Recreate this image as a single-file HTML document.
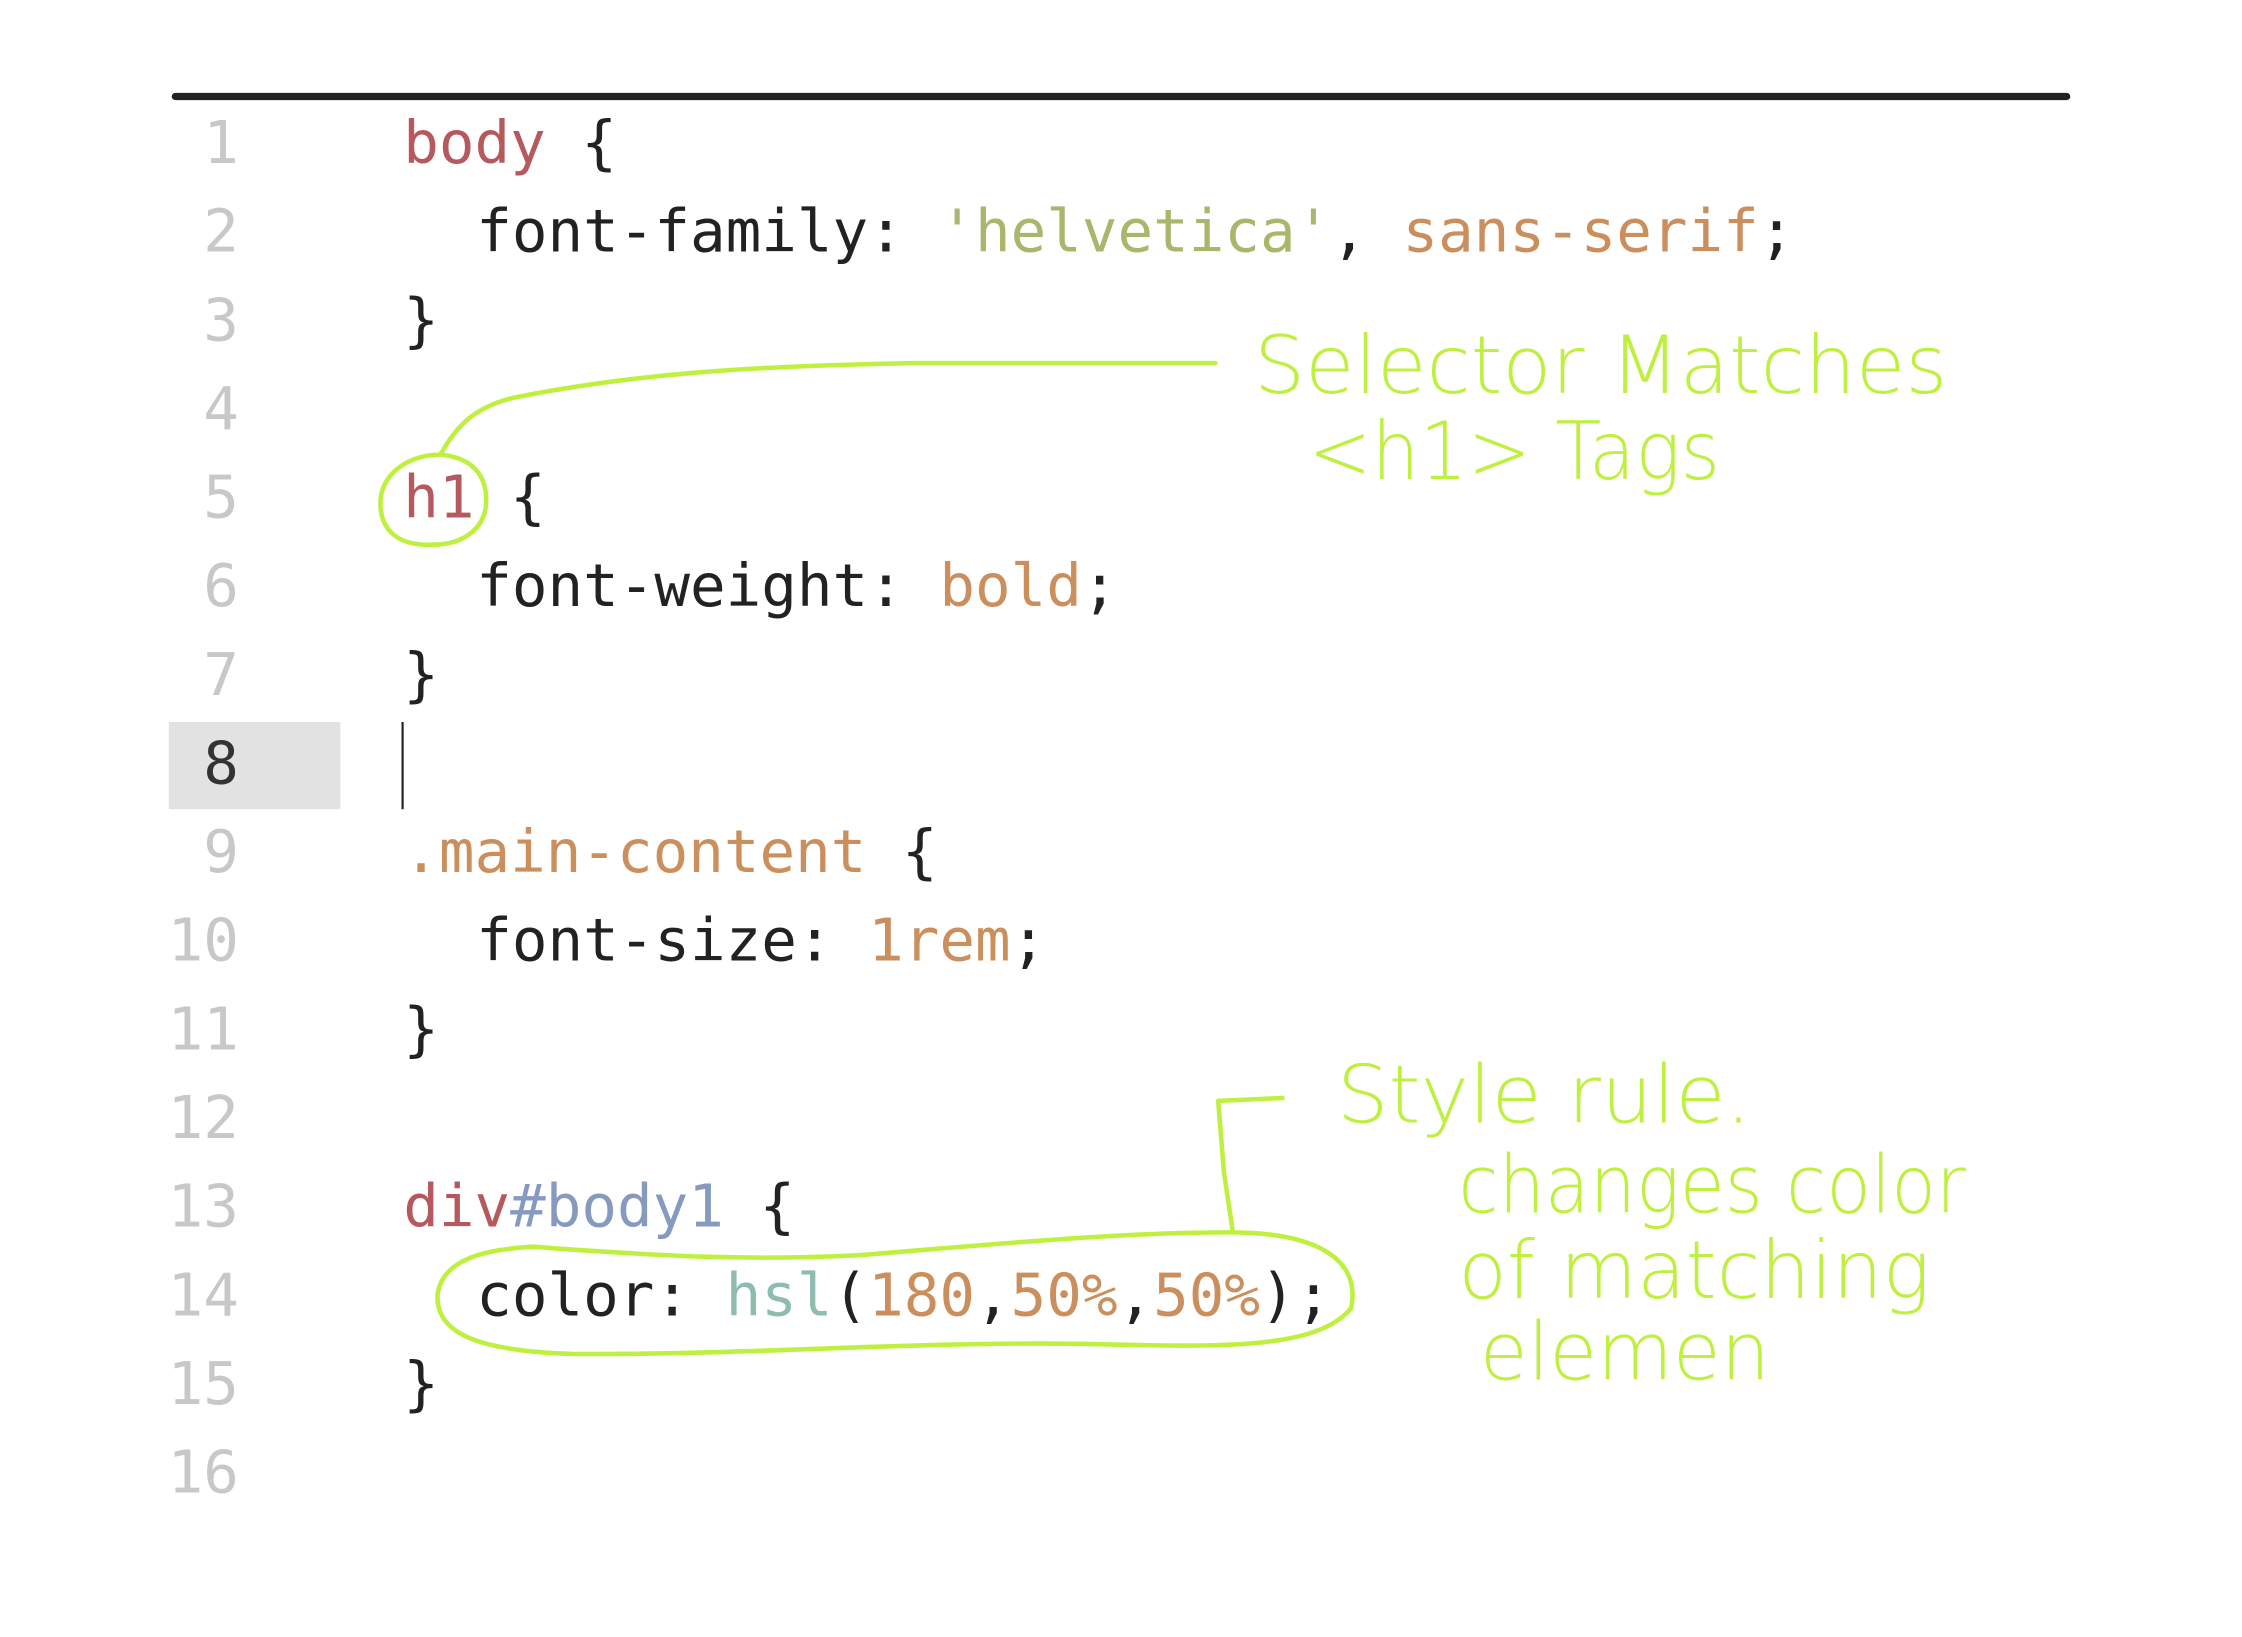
<!DOCTYPE html>
<html><head><meta charset="utf-8"><style>
html,body{margin:0;padding:0;background:#fff;width:2242px;height:1637px;overflow:hidden}
svg{display:block}
.c{font-family:"DejaVu Sans Mono","Liberation Mono",monospace;font-size:41.4px}
.n{fill:#c8c8c8;text-anchor:end}
.k{fill:#b5595e}.o{fill:#cb8f5e}.s{fill:#a9b66c}.b{fill:#869ac0}.t{fill:#8fbcb0}.d{fill:#222}
.h{font-family:"DejaVu Sans","Liberation Sans",sans-serif;font-size:56px;fill:#bff03f;font-weight:200}
.g{fill:none;stroke:#bff03f;stroke-width:3.2;stroke-linecap:round;stroke-linejoin:round}
</style></head><body>
<svg width="2242" height="1637" viewBox="0 0 1568 1145" xmlns="http://www.w3.org/2000/svg">
<rect x="120" y="65" width="1328" height="5" rx="2.5" fill="#222"/>
<rect x="118" y="505" width="120" height="61" fill="#e2e2e2"/>
<line x1="281.5" y1="505" x2="281.5" y2="566" stroke="#222" stroke-width="1.5"/>
<g class="c" transform="translate(0,-3)">
<text class="n" x="167" y="117">1</text>
<text class="n" x="167" y="179">2</text>
<text class="n" x="167" y="241">3</text>
<text class="n" x="167" y="303">4</text>
<text class="n" x="167" y="365">5</text>
<text class="n" x="167" y="427">6</text>
<text class="n" x="167" y="489">7</text>
<text class="n" x="167" y="551" style="fill:#333">8</text>
<text class="n" x="167" y="613">9</text>
<text class="n" x="167" y="675">10</text>
<text class="n" x="167" y="737">11</text>
<text class="n" x="167" y="799">12</text>
<text class="n" x="167" y="861">13</text>
<text class="n" x="167" y="923">14</text>
<text class="n" x="167" y="985">15</text>
<text class="n" x="167" y="1047">16</text>
<text x="282" y="117" xml:space="preserve"><tspan class="k">body</tspan><tspan class="d"> {</tspan></text>
<text x="333" y="179" xml:space="preserve"><tspan class="d">font-family: </tspan><tspan class="s">'helvetica'</tspan><tspan class="d">, </tspan><tspan class="o">sans-serif</tspan><tspan class="d">;</tspan></text>
<text x="282" y="241" class="d">}</text>
<text x="282" y="365" xml:space="preserve"><tspan class="k">h1</tspan><tspan class="d"> {</tspan></text>
<text x="333" y="427" xml:space="preserve"><tspan class="d">font-weight: </tspan><tspan class="o">bold</tspan><tspan class="d">;</tspan></text>
<text x="282" y="489" class="d">}</text>
<text x="282" y="613" xml:space="preserve"><tspan class="o">.main-content</tspan><tspan class="d"> {</tspan></text>
<text x="333" y="675" xml:space="preserve"><tspan class="d">font-size: </tspan><tspan class="o">1rem</tspan><tspan class="d">;</tspan></text>
<text x="282" y="737" class="d">}</text>
<text x="282" y="861" xml:space="preserve"><tspan class="k">div</tspan><tspan class="b">#body1</tspan><tspan class="d"> {</tspan></text>
<text x="333" y="923" xml:space="preserve"><tspan class="d">color: </tspan><tspan class="t">hsl</tspan><tspan class="d">(</tspan><tspan class="o">180</tspan><tspan class="d">,</tspan><tspan class="o">50%</tspan><tspan class="d">,</tspan><tspan class="o">50%</tspan><tspan class="d">);</tspan></text>
<text x="282" y="985" class="d">}</text>
</g>
<path class="g" d="M850 254 L640 254 C520 256 440 262 360 278 C330 285 318 300 308 318"/>
<path class="g" d="M308 318 C285 318 266 332 266 352 C266 372 280 382 302 381 C326 381 340 368 340 350 C340 332 330 320 308 318"/>
<path class="g" d="M897 768 L852 770 L856 820 L862 860"/>
<path class="g" d="M372 872 C340 874 310 880 306 905 C304 935 340 945 400 947 C520 948 640 938 760 940 C850 942 920 945 945 915 C952 880 920 862 860 862 C780 862 700 870 600 878 C520 882 460 878 400 874 C385 873 375 872 372 872"/>
<text class="h" x="877" y="275" textLength="485" lengthAdjust="spacingAndGlyphs">Selector Matches</text>
<text class="h" x="915" y="335" textLength="288" lengthAdjust="spacingAndGlyphs">&lt;h1&gt; Tags</text>
<text class="h" x="935" y="785" textLength="290" lengthAdjust="spacingAndGlyphs">Style rule.</text>
<text class="h" x="1020" y="848" textLength="355" lengthAdjust="spacingAndGlyphs">changes color</text>
<text class="h" x="1020" y="908" textLength="330" lengthAdjust="spacingAndGlyphs">of matching</text>
<text class="h" x="1035" y="965" textLength="203" lengthAdjust="spacingAndGlyphs">elemen</text>
</svg>
</body></html>
